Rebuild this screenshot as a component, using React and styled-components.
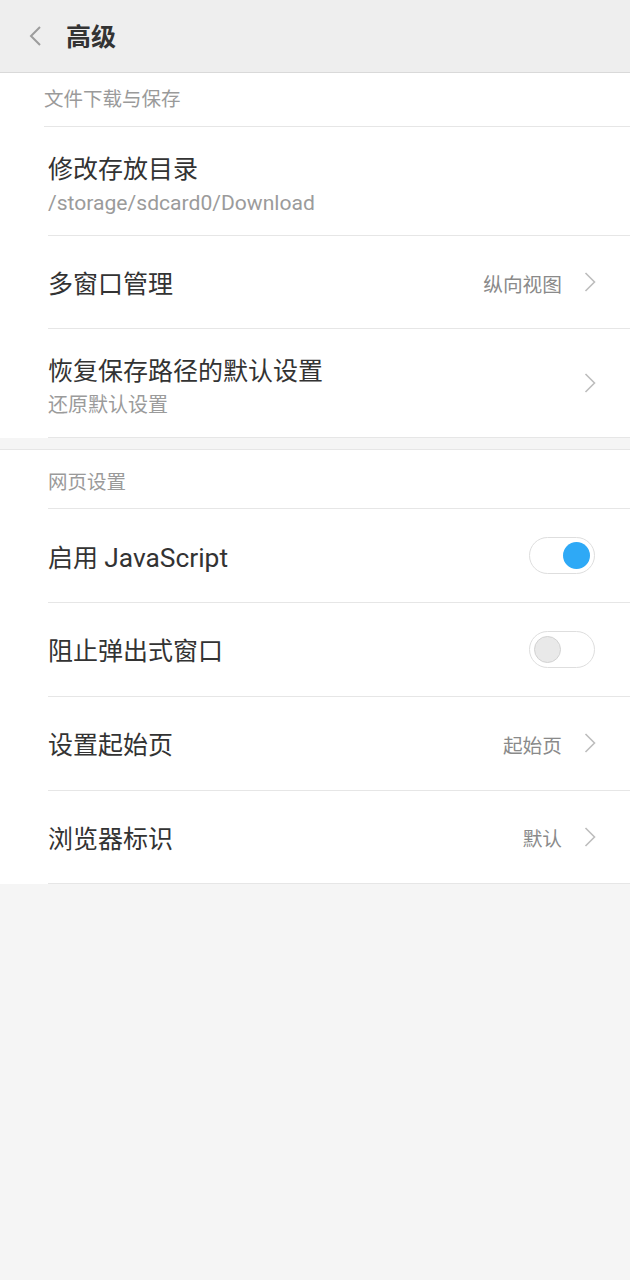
import React from "react";
import styled, { createGlobalStyle } from "styled-components";

const Global = createGlobalStyle`
  html, body { margin: 0; padding: 0; background: #f5f5f5; }
  body { font-family: Roboto, "Noto Sans CJK SC", "Noto Sans", sans-serif; -webkit-font-smoothing: antialiased; }
  * { box-sizing: border-box; }
`;

const Page = styled.div`
  width: 630px;
  min-height: 1280px;
  background: #f5f5f5;
`;

const TopBar = styled.header`
  height: 73px;
  background: #eeeeee;
  border-bottom: 1px solid #d9d9d9;
  display: flex;
  align-items: center;
  padding-left: 28px;
`;

const BackButton = styled.span`
  display: flex;
  width: 16px;
  height: 24px;
  align-items: center;
  margin-right: 22px;
`;

const Title = styled.h1`
  margin: 0;
  font-size: 25px;
  font-weight: 700;
  color: #333;
  line-height: 1;
  margin-top: 2px;
`;

const Section = styled.section`
  background: #fff;
  border-top: ${(p) => (p.$topBorder ? "1px solid #e6e6e6" : "none")};
  margin-top: ${(p) => p.$gap || 0}px;
`;

const SectionHeader = styled.div`
  margin-left: ${(p) => p.$inset}px;
  height: ${(p) => p.$height}px;
  border-bottom: 1px solid #e6e6e6;
  display: flex;
  align-items: center;
  padding-top: ${(p) => p.$top || 0}px;
  padding-bottom: ${(p) => p.$bottom || 0}px;
  font-size: 19.5px;
  color: #9a9a9a;
`;

const Row = styled.div`
  margin-left: 48px;
  height: ${(p) => p.$height}px;
  border-bottom: 1px solid #e6e6e6;
  display: flex;
  align-items: ${(p) => (p.$twoLine ? "flex-start" : "center")};
  padding-top: ${(p) => (p.$twoLine ? 25 : 0)}px;
  padding-right: ${(p) => p.$right || 34}px;
`;

const TextCol = styled.div`
  flex: 1;
  display: flex;
  flex-direction: column;
  padding-top: ${(p) => (p.$twoLine ? 0 : 6)}px;
`;

const RowTitle = styled.div`
  font-size: 25px;
  line-height: 36px;
  color: #333;
`;

const RowSub = styled.div`
  font-size: 20px;
  line-height: 30px;
  color: #9b9b9b;
`;

const Latin = styled.span`
  font-size: 1.055em;
`;

const Value = styled.span`
  font-size: 19.7px;
  color: #8a8a8a;
  margin-right: 22px;
  padding-top: 2px;
`;

const ChevronWrap = styled.span`
  display: flex;
  align-items: center;
  align-self: center;
  margin-top: ${(p) => (p.$twoLine ? -25 : 0)}px;
`;

const Track = styled.span`
  width: 66px;
  height: 37px;
  border-radius: 19px;
  border: 1.5px solid #dedede;
  background: #fff;
  display: flex;
  align-items: center;
  justify-content: ${(p) => (p.$on ? "flex-end" : "flex-start")};
  padding: 0 4px;
`;

const Knob = styled.span`
  width: 27px;
  height: 27px;
  border-radius: 50%;
  background: ${(p) => (p.$on ? "#2ea9f6" : "#e9e9e9")};
  border: ${(p) => (p.$on ? "none" : "1px solid #d2d2d2")};
`;

const Back = () => (
  <svg width="14" height="20" viewBox="0 0 14 20">
    <path d="M12 1 L3 10 L12 19" fill="none" stroke="#9c9c9c" strokeWidth="2" />
  </svg>
);

const Chevron = () => (
  <svg width="12" height="20" viewBox="0 0 12 20">
    <path d="M1.5 1 L10.5 10 L1.5 19" fill="none" stroke="#bdbdbd" strokeWidth="1.6" />
  </svg>
);

const Toggle = ({ on }) => (
  <Track $on={on}>
    <Knob $on={on} />
  </Track>
);

export default function App() {
  return (
    <Page>
      <Global />
      <TopBar>
        <BackButton>
          <Back />
        </BackButton>
        <Title>高级</Title>
      </TopBar>

      <Section>
        <SectionHeader $inset={44} $height={54} $bottom={5}>文件下载与保存</SectionHeader>
        <Row $height={109} $twoLine>
          <TextCol $twoLine>
            <RowTitle>修改存放目录</RowTitle>
            <RowSub>
              <Latin>/storage/sdcard0/Download</Latin>
            </RowSub>
          </TextCol>
        </Row>
        <Row $height={93}>
          <TextCol>
            <RowTitle>多窗口管理</RowTitle>
          </TextCol>
          <Value>纵向视图</Value>
          <ChevronWrap>
            <Chevron />
          </ChevronWrap>
        </Row>
        <Row $height={109} $twoLine>
          <TextCol $twoLine>
            <RowTitle>恢复保存路径的默认设置</RowTitle>
            <RowSub>还原默认设置</RowSub>
          </TextCol>
          <ChevronWrap $twoLine>
            <Chevron />
          </ChevronWrap>
        </Row>
      </Section>

      <Section $topBorder $gap={11}>
        <SectionHeader $inset={48} $height={59} $top={2}>网页设置</SectionHeader>
        <Row $height={93.5} $right={35}>
          <TextCol>
            <RowTitle>
              启用 <Latin>JavaScript</Latin>
            </RowTitle>
          </TextCol>
          <Toggle on />
        </Row>
        <Row $height={94} $right={35}>
          <TextCol>
            <RowTitle>阻止弹出式窗口</RowTitle>
          </TextCol>
          <Toggle on={false} />
        </Row>
        <Row $height={94}>
          <TextCol>
            <RowTitle>设置起始页</RowTitle>
          </TextCol>
          <Value>起始页</Value>
          <ChevronWrap>
            <Chevron />
          </ChevronWrap>
        </Row>
        <Row $height={93.5}>
          <TextCol>
            <RowTitle>浏览器标识</RowTitle>
          </TextCol>
          <Value>默认</Value>
          <ChevronWrap>
            <Chevron />
          </ChevronWrap>
        </Row>
      </Section>
    </Page>
  );
}
